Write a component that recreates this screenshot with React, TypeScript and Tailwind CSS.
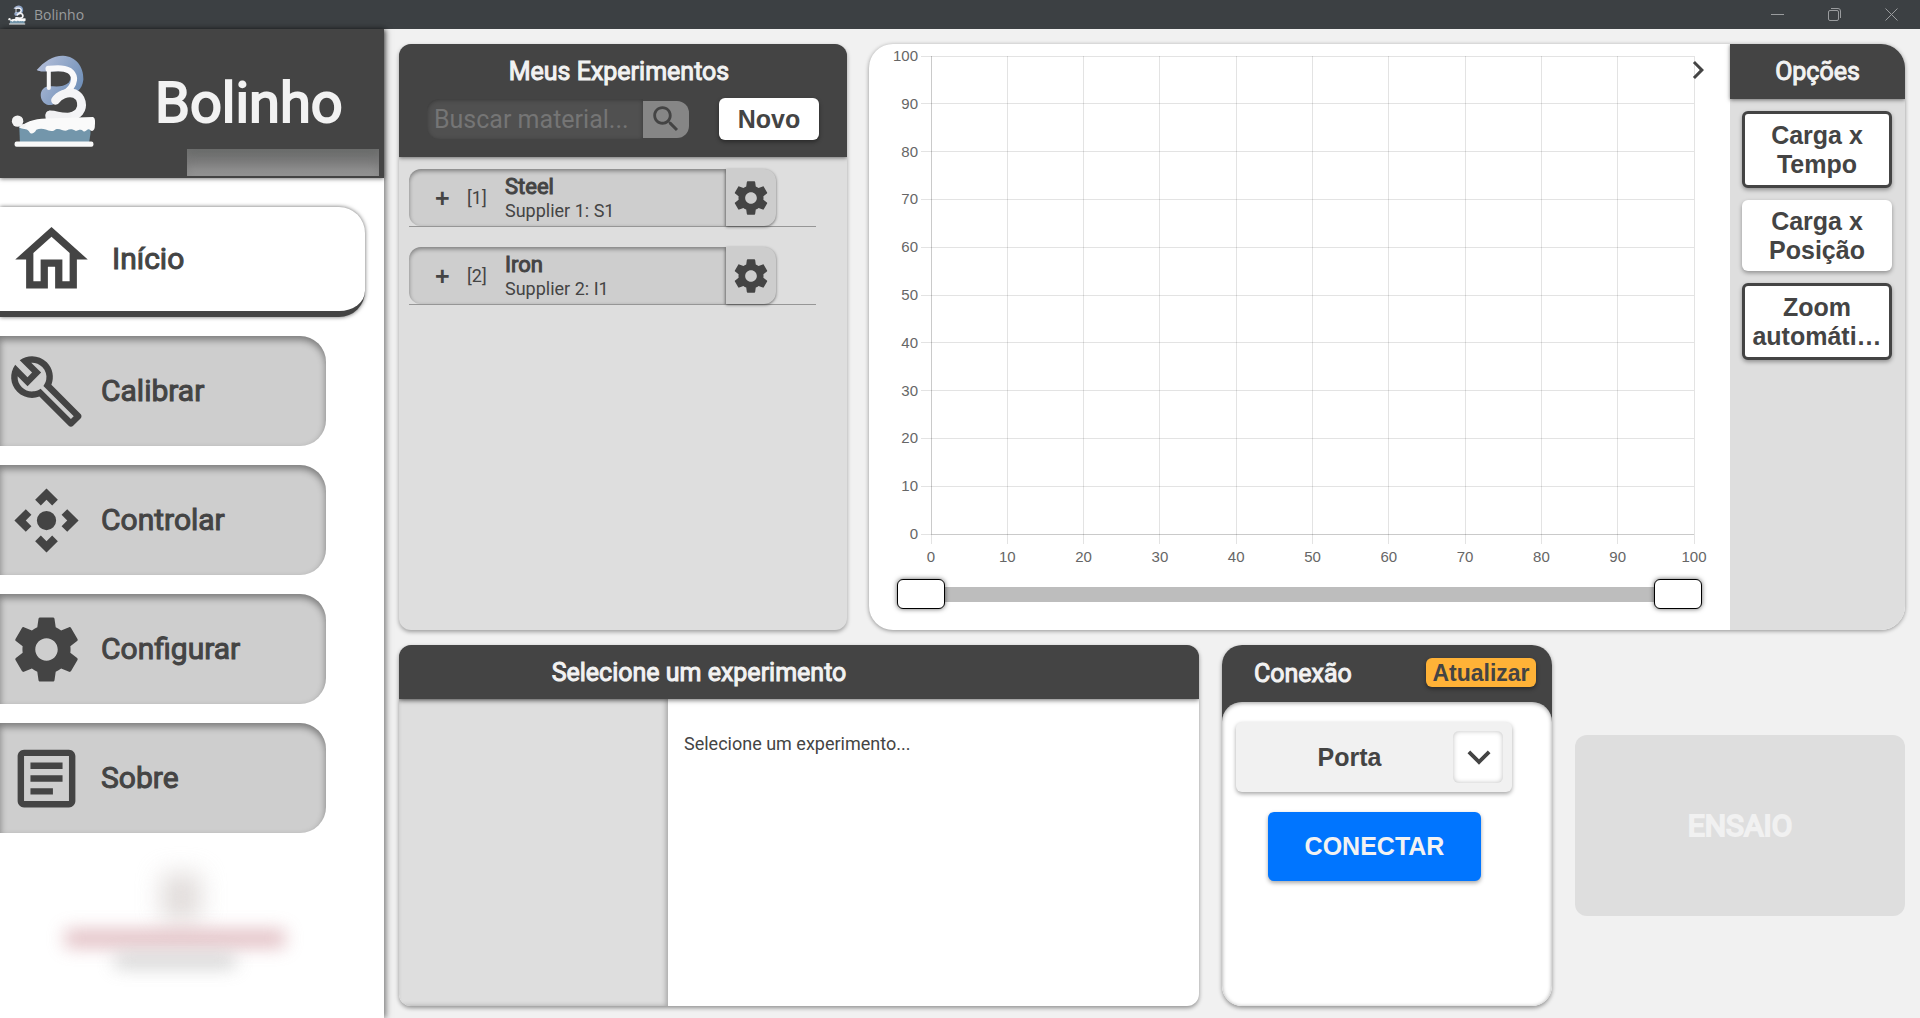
import React from "react";

const fauxBold = "[-webkit-text-stroke:1px_currentColor]";

const GEAR =
  "M19.43 12.98c.04-.32.07-.64.07-.98s-.03-.66-.07-.98l2.11-1.65c.19-.15.24-.42.12-.64l-2-3.46c-.12-.22-.39-.3-.61-.22l-2.49 1c-.52-.4-1.08-.73-1.69-.98l-.38-2.65C14.46 2.18 14.25 2 14 2h-4c-.25 0-.46.18-.49.42l-.38 2.65c-.61.25-1.17.59-1.69.98l-2.49-1c-.23-.09-.49 0-.61.22l-2 3.46c-.13.22-.07.49.12.64l2.11 1.65c-.04.32-.07.65-.07.98s.03.66.07.98l-2.11 1.65c-.19.15-.24.42-.12.64l2 3.46c.12.22.39.3.61.22l2.49-1c.52.4 1.08.73 1.69.98l.38 2.65c.03.24.24.42.49.42h4c.25 0 .46-.18.49-.42l.38-2.65c.61-.25 1.17-.59 1.69-.98l2.49 1c.23.09.49 0 .61-.22l2-3.46c.12-.22.07-.49-.12-.64l-2.11-1.65zM12 15.5c-1.93 0-3.5-1.57-3.5-3.5s1.57-3.5 3.5-3.5 3.5 1.57 3.5 3.5-1.57 3.5-3.5 3.5z";
const HOME =
  "M12 5.69l5 4.5V18h-2v-6H9v6H7v-7.81l5-4.5M12 3L2 12h3v8h6v-6h2v6h6v-8h3L12 3z";
const WRENCH =
  "M22.61 18.99l-9.08-9.08c.93-2.34.45-5.1-1.44-7C9.79.61 6.21.4 3.66 2.26L7.5 6.11 6.08 7.52 2.25 3.69C.39 6.23.6 9.82 2.9 12.11c1.86 1.86 4.57 2.35 6.89 1.48l9.11 9.11c.39.39 1.02.39 1.41 0l2.3-2.3c.4-.38.4-1.01 0-1.41zm-3 1.6l-9.46-9.46c-.61.45-1.29.72-2 .82-1.36.2-2.79-.21-3.83-1.25C3.37 9.76 2.93 8.5 3 7.26l3.09 3.09 4.24-4.24-3.09-3.09c1.24-.07 2.49.37 3.44 1.31 1.08 1.08 1.49 2.57 1.24 3.96-.12.71-.42 1.37-.88 1.96l9.45 9.45-.88.89z";
const MOVE =
  "M15.54 5.54L13.77 7.3 12 5.54 10.23 7.3 8.46 5.54 12 2zm2.92 10l-1.76-1.77L18.46 12l-1.76-1.77 1.76-1.77L22 12zm-10 2.92l1.77-1.76L12 18.46l1.77-1.76 1.77 1.76L12 22zm-2.92-10l1.76 1.77L5.54 12l1.76 1.77-1.76 1.77L2 12zM15 12a3 3 0 1 1-6 0 3 3 0 0 1 6 0z";
const ARTICLE =
  "M19 5v14H5V5h14m0-2H5c-1.1 0-2 .9-2 2v14c0 1.1.9 2 2 2h14c1.1 0 2-.9 2-2V5c0-1.1-.9-2-2-2zM14 17H7v-2h7v2zm3-4H7v-2h10v2zm0-4H7V7h10v2z";
const SEARCH =
  "M15.5 14h-.79l-.28-.27C15.41 12.59 16 11.11 16 9.5 16 5.91 13.09 3 9.5 3S3 5.91 3 9.5 5.91 16 9.5 16c1.61 0 3.09-.59 4.23-1.57l.27.28v.79l5 4.99L20.49 19l-4.99-5zm-6 0C7.01 14 5 11.99 5 9.5S7.01 5 9.5 5 14 7.01 14 9.5 11.99 14 9.5 14z";
const NEXT = "M10 6L8.59 7.41 13.17 12l-4.58 4.59L10 18l6-6z";
const DOWN = "M16.59 8.59L12 13.17 7.41 8.59 6 10l6 6 6-6z";

function Icon({ d, className }: { d: string; className: string }) {
  return (
    <svg viewBox="0 0 24 24" fill="currentColor" fillRule="evenodd" className={className} aria-hidden="true">
      <path d={d} />
    </svg>
  );
}

function Logo({ className, id }: { className: string; id: string }) {
  return (
    <svg viewBox="32 166 258 280" className={className} aria-hidden="true">
      <defs>
        <linearGradient id={id} x1="0" y1="0" x2="1" y2="0.6">
          <stop offset="0" stopColor="#b9c2dc" />
          <stop offset="1" stopColor="#6f8fb8" />
        </linearGradient>
      </defs>
      <path
        fill={`url(#${id})`}
        d="M111 214 C132 188 162 170 190 171 C228 173 251 203 250 242 C248 258 243 268 234 276 L212 268 C200 280 186 290 172 300 C170 308 166 314 158 317 C140 322 124 308 123 290 C122 274 134 262 148 262 C168 262 190 266 206 252 C216 238 214 224 200 217 L136 218 C126 219 118 218 111 214Z"
      />
      <path d="M147 214 V267" stroke="#f7f7f9" strokeWidth="12" strokeLinecap="round" fill="none" />
      <path
        d="M146 210 C160 209 172 208 184 209 C212 211 224 226 222 244 C220 262 208 272 194 284"
        stroke="#f9f9fb"
        strokeWidth="18"
        strokeLinecap="round"
        fill="none"
      />
      <path
        d="M167 304 C176 290 202 276 224 284 C246 294 250 322 238 338 C222 358 180 362 150 348"
        stroke="#f4f4f6"
        strokeWidth="26"
        strokeLinecap="round"
        fill="none"
      />
      <path d="M150 334 C170 334 190 344 214 340 L216 366 H140 C134 350 138 336 150 334Z" fill="#f1f1f3" />
      <path d="M59 380 H271 V404 L267 430 H61Z" fill="#7396ab" />
      <path
        d="M58 384 C74 372 100 358 140 358 L278 354 C287 356 285 372 284 384 C282 396 274 398 268 391 C262 387 258 400 250 396 C242 388 236 392 228 395 C218 390 210 388 200 394 C190 396 180 386 168 390 C160 398 148 396 138 391 C128 388 118 388 110 392 C102 406 92 406 88 396 C80 386 70 392 58 384Z"
        fill="#fafafa"
      />
      <circle cx="54" cy="366" r="17" fill="#f3f3f3" />
      <path d="M62 376 L72 388 L82 374Z" fill="#f3f3f3" />
      <rect x="45" y="427" width="235" height="15" rx="6" fill="#f8f8f8" />
    </svg>
  );
}

function TitleBar() {
  return (
    <header className="flex h-[29px] shrink-0 items-center bg-[#3c4043] text-[#9a9c9e]">
      <Logo id="bar" className="ml-2 h-5 w-[18px]" />
      <span className="ml-2 font-['Open_Sans',sans-serif] text-[14px] leading-5">Bolinho</span>
      <div className="ml-auto flex h-full">
        <button aria-label="Minimizar" className="flex w-[57px] items-center justify-center">
          <svg className="size-[13px]" viewBox="0 0 13 13" stroke="currentColor" fill="none" shapeRendering="crispEdges">
            <path d="M0 6.500H13" />
          </svg>
        </button>
        <button aria-label="Restaurar" className="flex w-[57px] items-center justify-center">
          <svg className="size-[13px]" viewBox="0 0 13 13" stroke="currentColor" fill="none">
            <rect x="0.500" y="2.500" width="10" height="10" rx="1.500" />
            <path d="M3 0.500H10Q12.500 0.500 12.500 3V10" />
          </svg>
        </button>
        <button aria-label="Fechar" className="flex w-[57px] items-center justify-center">
          <svg className="size-[13px]" viewBox="0 0 13 13" stroke="currentColor" fill="none">
            <path d="M0.500 0.500L12.500 12.500M12.500 0.500L0.500 12.500" />
          </svg>
        </button>
      </div>
    </header>
  );
}

const navItems = [
  { label: "Calibrar", icon: WRENCH },
  { label: "Controlar", icon: MOVE },
  { label: "Configurar", icon: GEAR },
  { label: "Sobre", icon: ARTICLE },
];

function Sidebar() {
  return (
    <aside className="z-10 flex w-1/5 shrink-0 flex-col bg-white shadow-[2px_0_6px_rgba(0,0,0,0.5)]">
      <div className="flex h-[149px] shrink-0 flex-col bg-[#444] shadow-[0_1px_4px_rgba(0,0,0,0.5)]">
        <div className="flex flex-1 items-center">
          <Logo id="brand" className="mt-6 ml-[10px] h-[94px] w-[87px] shrink-0" />
          <h1 className="mt-7 ml-[58px] text-[56px] leading-[64px] text-[#f2f2f2] [-webkit-text-stroke:2px_currentColor]">
            Bolinho
          </h1>
        </div>
        <div className="mr-[5px] mb-[2px] h-[27px] w-1/2 self-end bg-linear-to-b from-[#666867] via-[#7d7d7d] to-[#9c9c9c] shadow-[inset_0_0_10px_rgba(120,120,120,0.6)]" />
      </div>
      <nav className="mt-[29px] flex flex-col gap-[19px] text-[30px] leading-9 text-[#444]">
        <a
          href="#inicio"
          className="flex h-[110px] w-[95%] items-center rounded-r-[26px] border-b-6 border-[#444] bg-white pl-2 shadow-[0_0_4px_rgba(0,0,0,0.6)]"
        >
          <Icon d={HOME} className="size-[87px]" />
          <span className={`ml-[17px] ${fauxBold}`}>Início</span>
        </a>
        {navItems.map((n) => (
          <a
            key={n.label}
            href={`#${n.label.toLowerCase()}`}
            className="flex h-[110px] w-[85%] items-center rounded-r-[26px] bg-[#cecece] pl-2 shadow-[inset_0_4px_7px_rgba(0,0,0,0.4)]"
          >
            <Icon d={n.icon} className="size-[77px]" />
            <span className={`ml-4 ${fauxBold}`}>{n.label}</span>
          </a>
        ))}
      </nav>
      <div className="mt-10 mr-[40px] ml-[6px] flex flex-col items-center" aria-hidden="true">
        <div className="ml-3 h-12 w-10 bg-[#d6cfcd] opacity-70 blur-[12px]" />
        <div className="mt-[9px] h-[17px] w-[220px] bg-[#d39ea5] opacity-70 blur-[9px]" />
        <div className="mt-2 h-3 w-[120px] bg-[#bdbdbd] opacity-80 blur-[9px]" />
      </div>
    </aside>
  );
}

function ExperimentRow({ id, name, supplier }: { id: number; name: string; supplier: string }) {
  return (
    <li className="flex h-[58px] w-[93%] border-b border-[#969696]">
      <button className="flex w-[317px] items-center rounded-l-xl bg-[#cecece] text-left shadow-[inset_0_2px_4px_rgba(0,0,0,0.4)]">
        <span className="ml-[26px] w-8 font-['Liberation_Sans',sans-serif] text-[25px] leading-7 font-bold">+</span>
        <span className="w-[38px] text-[18px] leading-5">[{id}]</span>
        <span className="flex flex-col">
          <span className={`text-[22px] leading-[26px] ${fauxBold}`}>{name}</span>
          <span className="text-[18px] leading-[22px]">{supplier}</span>
        </span>
      </button>
      <button
        aria-label={`Configurar ${name}`}
        className="flex w-[50px] items-center justify-center rounded-r-xl bg-[#cdcdcd] shadow-[0_1px_3px_rgba(0,0,0,0.5)]"
      >
        <Icon d={GEAR} className="size-10" />
      </button>
    </li>
  );
}

function Experiments() {
  return (
    <section className="flex flex-col overflow-hidden rounded-xl bg-[#dedede] shadow-[0_2px_4px_rgba(0,0,0,0.35)]">
      <div className="flex h-[113px] flex-col bg-[#444] px-7 shadow-[0_1px_4px_rgba(0,0,0,0.5)]">
        <h2 className={`mt-3 mr-2 text-center text-[25px] leading-8 text-[#f2f2f2] ${fauxBold}`}>
          Meus Experimentos
        </h2>
        <div className="mt-[10px] flex items-center justify-between">
          <div className="flex items-center">
            <input
              type="text"
              aria-label="Buscar material"
              placeholder="Buscar material..."
              className="h-10 w-[216px] rounded-l-xl bg-[#505050] pl-[7px] text-[25px] text-[#f2f2f2] shadow-[inset_0_1px_4px_rgba(0,0,0,0.3)] placeholder:text-[#757575]"
            />
            <button
              aria-label="Buscar"
              className="flex h-[37px] w-[46px] items-center justify-center rounded-r-xl bg-[#868686]"
            >
              <Icon d={SEARCH} className="size-[34px]" />
            </button>
          </div>
          <button className="h-[42px] w-[100px] rounded-md bg-white font-['Liberation_Sans',sans-serif] text-[25px] leading-7 font-bold shadow-[0_2px_4px_rgba(0,0,0,0.4)]">
            Novo
          </button>
        </div>
      </div>
      <ul className="mt-3 flex flex-col gap-5 pl-[10px]">
        <ExperimentRow id={1} name="Steel" supplier="Supplier 1: S1" />
        <ExperimentRow id={2} name="Iron" supplier="Supplier 2: I1" />
      </ul>
    </section>
  );
}

const ticks = [0, 10, 20, 30, 40, 50, 60, 70, 80, 90, 100];

function Chart() {
  return (
    <svg
      role="img"
      aria-label="Gráfico de carga"
      className="h-full w-full overflow-visible font-['Liberation_Sans',sans-serif] text-[15px]"
    >
      <g stroke="#000" strokeOpacity="0.11" shapeRendering="crispEdges">
        {ticks.map((t) => (
          <React.Fragment key={t}>
            <line x1={-10} x2="100%" y1={`${100 - t}%`} y2={`${100 - t}%`} />
            <line x1={`${t}%`} x2={`${t}%`} y1="0" y2="100%" />
            <svg x={`${t}%`} y="100%" width="1" height="1" className="overflow-visible">
              <line x1="0" x2="0" y1="0" y2="10" />
            </svg>
          </React.Fragment>
        ))}
        <line x1="0" x2="0" y1="0" y2="100%" />
        <line x1="0" x2="100%" y1="100%" y2="100%" />
      </g>
      <g fill="#666">
        {ticks.map((t) => (
          <React.Fragment key={t}>
            <text x={-13} y={`${100 - t}%`} dy={5} textAnchor="end">
              {t}
            </text>
            <text x={`${t}%`} y="100%" dy={28} textAnchor="middle">
              {t}
            </text>
          </React.Fragment>
        ))}
      </g>
    </svg>
  );
}

const rangeInput =
  "pointer-events-none absolute inset-0 h-full w-full appearance-none bg-transparent [&::-webkit-slider-thumb]:pointer-events-auto [&::-webkit-slider-thumb]:h-[30px] [&::-webkit-slider-thumb]:w-12 [&::-webkit-slider-thumb]:appearance-none [&::-webkit-slider-thumb]:rounded-md [&::-webkit-slider-thumb]:border [&::-webkit-slider-thumb]:border-black [&::-webkit-slider-thumb]:bg-white [&::-webkit-slider-thumb]:shadow-[0_0_5px_rgba(0,0,0,0.6)]";

function PlotCard() {
  return (
    <section className="flex overflow-hidden rounded-3xl bg-white shadow-[0_1px_4px_rgba(0,0,0,0.4)]">
      <div className="relative flex min-w-0 flex-1 flex-col">
        <div className="min-h-0 flex-1 pt-3 pr-[36px] pl-[62px]">
          <Chart />
        </div>
        <div className="mx-7 mt-[45px] mb-[21px] h-[30px] shrink-0">
          <div className="relative flex h-full items-center">
            <div className="mt-px h-[15px] w-full bg-[#bdbdbd]" />
            <input type="range" aria-label="Início do intervalo" min={0} max={100} defaultValue={0} className={rangeInput} />
            <input type="range" aria-label="Fim do intervalo" min={0} max={100} defaultValue={100} className={rangeInput} />
          </div>
        </div>
        <button aria-label="Recolher opções" className="absolute top-2 right-[14px]">
          <Icon d={NEXT} className="size-9" />
        </button>
      </div>
      <div className="flex w-[175px] shrink-0 flex-col bg-[#dedede]">
        <h2
          className={`h-[55px] bg-[#444] pt-3 text-center text-[25px] leading-8 text-[#f2f2f2] shadow-[0_1px_4px_rgba(0,0,0,0.5)] ${fauxBold}`}
        >
          Opções
        </h2>
        <div className="mt-3 flex flex-col gap-3 pr-[13px] pl-3 font-['Liberation_Sans',sans-serif] text-[25px] leading-[29px] font-bold">
          <button className="rounded-md border-3 border-[#444] bg-white pt-[7px] pb-[6px] shadow-[0_2px_4px_rgba(0,0,0,0.35)]">
            Carga x<br />
            Tempo
          </button>
          <button className="rounded-md bg-white pt-[7px] pb-[6px] shadow-[0_2px_4px_rgba(0,0,0,0.35)]">
            Carga x<br />
            Posição
          </button>
          <button className="rounded-md border-3 border-[#444] bg-white pt-[7px] pb-[6px] shadow-[0_2px_4px_rgba(0,0,0,0.35)]">
            Zoom
            <br />
            automáti…
          </button>
        </div>
      </div>
    </section>
  );
}

function Details() {
  return (
    <section className="flex flex-col overflow-hidden rounded-xl bg-white shadow-[0_2px_4px_rgba(0,0,0,0.4)]">
      <div className="z-10 h-[54px] shrink-0 bg-[#444] shadow-[0_1px_5px_rgba(0,0,0,0.6)]">
        <h2 className={`w-3/4 pt-3 text-center text-[25px] leading-8 text-[#f2f2f2] ${fauxBold}`}>
          Selecione um experimento
        </h2>
      </div>
      <div className="flex flex-1">
        <div className="w-[269px] bg-[#dedede] shadow-[inset_-2px_0_5px_rgba(0,0,0,0.25)]" />
        <p className="px-4 pt-[33px] text-[18px] leading-6">Selecione um experimento...</p>
      </div>
    </section>
  );
}

function Connection() {
  return (
    <section className="flex flex-col overflow-hidden rounded-[20px] bg-white shadow-[0_2px_4px_rgba(0,0,0,0.4)]">
      <div className="flex h-[77px] shrink-0 items-start justify-between bg-[#444] pt-[13px] pr-4 pl-8">
        <h2 className={`text-[25px] leading-8 text-[#f2f2f2] ${fauxBold}`}>Conexão</h2>
        <button className="h-[29px] w-[110px] rounded-md bg-[#ffb237] font-['Liberation_Sans',sans-serif] text-[23px] leading-7 font-bold shadow-[0_2px_4px_rgba(0,0,0,0.4)]">
          Atualizar
        </button>
      </div>
      <div className="-mt-5 flex flex-1 flex-col rounded-[20px] bg-white pt-5 pl-[14px] font-['Liberation_Sans',sans-serif] text-[25px] leading-7 font-bold shadow-[inset_0_1px_4px_rgba(0,0,0,0.4)]">
        <div className="flex h-[70px] w-[276px] items-center rounded-md bg-[#f1f1f1] pr-[9px] shadow-[0_2px_4px_rgba(0,0,0,0.35)]">
          <span className="flex-1 pl-[10px] text-center">Porta</span>
          <button
            aria-label="Escolher porta"
            className="flex h-[52px] w-[50px] items-center justify-center rounded-md bg-white pl-[2px] shadow-[inset_0_0_5px_rgba(0,0,0,0.25)]"
          >
            <Icon d={DOWN} className="size-[46px] shrink-0" />
          </button>
        </div>
        <button className="mt-5 ml-8 h-[69px] w-[213px] rounded-md bg-[#0075ff] pb-[2px] text-[#f2f2f2] shadow-[0_2px_4px_rgba(0,0,0,0.35)]">
          CONECTAR
        </button>
      </div>
    </section>
  );
}

export default function App() {
  return (
    <div className="flex h-screen min-h-[900px] flex-col overflow-hidden bg-[#f1f1f1] font-[Roboto,sans-serif] text-[#444]">
      <TitleBar />
      <div className="flex min-h-0 flex-1">
        <Sidebar />
        <main className="grid min-w-0 flex-1 grid-rows-[586fr_361fr] gap-y-[15px] px-[15px] pt-[15px] pb-3">
          <div className="grid grid-cols-[448fr_1036fr] gap-x-[22px]">
            <Experiments />
            <PlotCard />
          </div>
          <div className="grid grid-cols-[800fr_330fr_330fr] gap-x-[23px]">
            <Details />
            <Connection />
            <button
              disabled
              className="h-1/2 self-center rounded-xl bg-[#dedede] text-[30px] text-[#f1f1f1] [-webkit-text-stroke:2px_currentColor]"
            >
              ENSAIO
            </button>
          </div>
        </main>
      </div>
    </div>
  );
}
